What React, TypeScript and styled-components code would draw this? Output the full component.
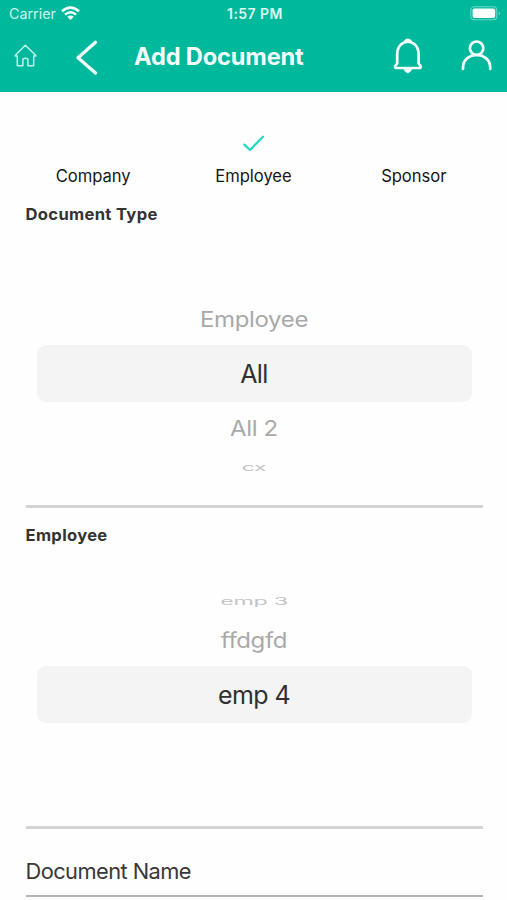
import React from "react";
import styled, { createGlobalStyle } from "styled-components";

const GlobalStyle = createGlobalStyle`
  * { box-sizing: border-box; }
  body { margin: 0; background: #fefefe; overflow: hidden; font-family: Inter, "Liberation Sans", sans-serif; }
`;

const Screen = styled.main`
  width: 507px;
  height: 900px;
  overflow: hidden;
  background: #fefefe;
`;

const Header = styled.header`
  height: 92px;
  background: #00b89c;
  color: #f4fffd;
`;

const StatusBar = styled.div`
  height: 27px;
  display: grid;
  grid-template-columns: 1fr auto 1fr;
  align-items: center;
  padding: 0 6px 0 9px;
`;

const Carrier = styled.div`
  display: flex;
  align-items: center;
  gap: 5px;
  font-size: 14.3px;
  letter-spacing: 0;
  color: #c9f7ee;
`;

const Clock = styled.time`
  font-size: 14px;
  font-weight: 600;
  letter-spacing: 0.45px;
  color: #dcfbf5;
`;

const BatteryIcon = styled.svg`
  justify-self: end;
`;

const NavBar = styled.nav`
  height: 60px;
  display: flex;
  align-items: center;
`;

const IconButton = styled.button<{ $width: number }>`
  width: ${(p) => p.$width}px;
  height: 60px;
  padding: 0;
  border: 0;
  background: none;
  color: inherit;
  flex: none;
`;

const Icon = styled.svg`
  display: block;
  fill: none;
  stroke: currentColor;
  stroke-linecap: round;
  stroke-linejoin: round;
`;

const Title = styled.h1`
  margin: 0;
  width: 246px;
  padding: 0 0 2px 8px;
  font-size: 23.6px;
  line-height: 57px;
  font-weight: 650;
  letter-spacing: -0.15px;
  white-space: nowrap;
`;

const Tabs = styled.div`
  height: 106px;
  padding: 40px 13px 0;
  display: grid;
  grid-template-columns: repeat(3, 160.3px);
`;

const Tab = styled.div`
  display: flex;
  flex-direction: column;
  align-items: center;
  font-size: 16.6px;
  letter-spacing: -0.05px;
  line-height: 24px;
  color: #171717;
`;

const TabMark = styled.div`
  height: 32px;
`;

const Field = styled.section`
  height: 310px;
  margin: 0 24.5px 11px 25.5px;
  border-bottom: 3px solid #d4d4d4;
`;

const FieldLabel = styled.h2`
  margin: 0;
  height: 32px;
  line-height: 32px;
  font-size: 16.6px;
  font-weight: 680;
  letter-spacing: 0.32px;
  color: #333;
`;

const Wheel = styled.div`
  padding: 37px 11px 0;
`;

type Slot = "far" | "near" | "selected";
const slotHeight = { far: 26, near: 52, selected: 57 };
const slotColor = { far: "#c4c4c4", near: "#a9a9a9", selected: "#303030" };
const slotTransform = {
  far: "translateY(1px) scaleY(0.43)",
  near: "translateY(0.7px) scaleY(0.88)",
  selected: "scaleY(1)",
};

const WheelItem = styled.div<{ $slot: Slot }>`
  height: ${(p) => slotHeight[p.$slot]}px;
  display: flex;
  align-items: center;
  justify-content: center;
  border-radius: 9px;
  background: ${(p) => (p.$slot === "selected" ? "#f4f4f4" : "transparent")};
  color: ${(p) => slotColor[p.$slot]};
`;

const WheelText = styled.span<{ $slot: Slot; $size: number }>`
  font-size: ${(p) => p.$size}px;
  letter-spacing: ${(p) => (p.$slot === "selected" ? -0.6 : -0.35)}px;
  line-height: 30px;
  white-space: nowrap;
  transform: ${(p) => slotTransform[p.$slot]};
`;

const NameInput = styled.div`
  height: 57px;
  margin: 0 24.5px 0 25.5px;
  padding-top: 15px;
  border-bottom: 2px solid #b5b5b5;
  font-size: 21.8px;
  letter-spacing: -0.55px;
  line-height: 32px;
  color: #383838;
`;

type Row = { slot: Slot; text: string; size: number };

function Picker({ label, rows }: { label: string; rows: Row[] }) {
  return (
    <Field>
      <FieldLabel>{label}</FieldLabel>
      <Wheel>
        {rows.map((r, i) => (
          <WheelItem key={i} $slot={r.slot}>
            <WheelText $slot={r.slot} $size={r.size}>{r.text}</WheelText>
          </WheelItem>
        ))}
      </Wheel>
    </Field>
  );
}

const documentTypes: Row[] = [
  { slot: "far", text: "", size: 24 },
  { slot: "near", text: "Employee", size: 24 },
  { slot: "selected", text: "All", size: 25 },
  { slot: "near", text: "All 2", size: 24 },
  { slot: "far", text: "cx", size: 23 },
];

const employees: Row[] = [
  { slot: "far", text: "emp 3", size: 23.3 },
  { slot: "near", text: "ffdgfd", size: 24 },
  { slot: "selected", text: "emp 4", size: 25 },
];

export default function App() {
  return (
    <>
      <GlobalStyle />
      <Screen>
        <Header>
          <StatusBar>
            <Carrier>
              Carrier
              <svg width="19" height="15" viewBox="0 0 19 15" fill="none" stroke="#f4fffd" strokeWidth="2.5">
                <path d="M1 5.2Q9.5-2 18 5.2M4 8.6Q9.5 4 15 8.6" />
                <path d="M6.2 10.8Q9.5 8 12.8 10.8L9.5 14Z" fill="#f4fffd" stroke="none" />
              </svg>
            </Carrier>
            <Clock>1:57 PM</Clock>
            <BatteryIcon width="31" height="15" viewBox="0 0 31 15">
              <rect x="0.8" y="0.8" width="26" height="13" rx="3.5" fill="none" stroke="#6ed6c6" strokeWidth="1.1" />
              <rect x="2.6" y="2.6" width="22.6" height="9.4" rx="2" fill="#fff" />
              <path d="M28.8 5.2Q31.4 7.3 28.8 9.5Z" fill="#6ed6c6" />
            </BatteryIcon>
          </StatusBar>
          <NavBar>
            <IconButton $width={60} aria-label="Home">
              <Icon width="60" height="60" strokeWidth="1.5" color="#bdf5eb">
                <path d="M15.3 28.2L25.3 18.3L35.7 28.2V29H33.7V38.7H27.9V32.2Q25.4 30.2 22.9 32.2V38.7H17.3V29H15.3Z" />
              </Icon>
            </IconButton>
            <IconButton $width={66} aria-label="Back">
              <Icon width="66" height="60" strokeWidth="3.3">
                <path d="M35.5 15.3L18 30.8L35.5 46" />
              </Icon>
            </IconButton>
            <Title>Add Document</Title>
            <IconButton $width={70} aria-label="Notifications">
              <Icon width="70" height="60" strokeWidth="2.7">
                <path d="M25.2 36.5V27.5C25.2 10.5 46.6 10.5 46.6 27.5V36.5L48.6 39Q49 41 47.5 41H24.3Q22.8 41 23.2 39Z" />
                <path d="M32.5 14.2Q35.8 10.5 39.3 14.2Z" fill="currentColor" strokeWidth="1.5" />
                <path d="M32.2 42.5H39.4Q35.8 48.5 32.2 42.5Z" fill="currentColor" strokeWidth="1.3" />
              </Icon>
            </IconButton>
            <IconButton $width={65} aria-label="Profile">
              <Icon width="65" height="60" strokeWidth="2.7">
                <circle cx="34.6" cy="21.2" r="6.7" />
                <path d="M21 42V40.5C21 23.8 48.2 23.8 48.2 40.5V42" />
              </Icon>
            </IconButton>
          </NavBar>
        </Header>
        <Tabs>
          {["Company", "Employee", "Sponsor"].map((name) => (
            <Tab key={name}>
              <TabMark>
                {name === "Employee" && (
                  <Icon width="24" height="24" strokeWidth="2.2" color="#1cd9c1">
                    <path d="M3.4 12.6L9 18L22 4.7" />
                  </Icon>
                )}
              </TabMark>
              {name}
            </Tab>
          ))}
        </Tabs>
        <Picker label="Document Type" rows={documentTypes} />
        <Picker label="Employee" rows={employees} />
        <NameInput>Document Name</NameInput>
      </Screen>
    </>
  );
}
